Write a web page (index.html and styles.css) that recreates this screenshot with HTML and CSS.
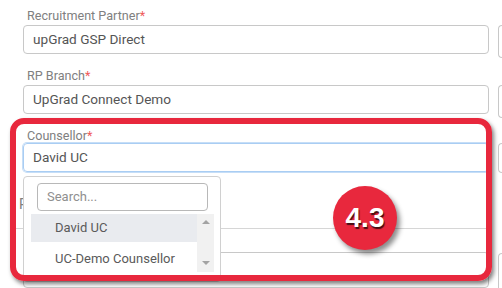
FILE: index.html
```html
<!DOCTYPE html>
<html lang="en">
<head>
  <meta charset="UTF-8" />
  <meta name="viewport" content="width=device-width, initial-scale=1.0"/>
  <title>Counsellor</title>
  <link rel="stylesheet" href="styles.css">
</head>
<body>

  <div class="page">
    <div class="row">
      <div class="field">
        <label>Recruitment Partner<span class="req">*</span></label>
        <div class="input">upGrad GSP Direct</div>
      </div>
      <div class="side"></div>
    </div>

    <div class="row">
      <div class="field">
        <label>RP Branch<span class="req">*</span></label>
        <div class="input">UpGrad Connect Demo</div>
      </div>
      <div class="side"></div>
    </div>

    <div class="row">
      <div class="field">
        <label>Counsellor<span class="req">*</span></label>
        <div class="input focus">David UC</div>

        <div class="dropdown">
          <div class="search">Search...</div>
          <div class="list">
            <div class="options">
              <div class="option active">David UC</div>
              <div class="option">UC-Demo Counsellor</div>
            </div>
            <div class="scrollbar">
              <span class="arrow up"></span>
              <span class="arrow down"></span>
            </div>
          </div>
        </div>
      </div>
      <div class="side side-focus"></div>
    </div>

    <div class="row">
      <div class="field">
        <label class="label-back">P</label>
        <div class="divider"></div>
        <div class="input input-last"></div>
      </div>
      <div class="side side-last"></div>
    </div>

    <div class="frame"></div>
    <div class="badge">4.3</div>
  </div>

</body>
</html>
```

FILE: styles.css
```css
body { margin: 0; font-family: Roboto, "Noto Sans", sans-serif; background: #fff; overflow: hidden; }
.page {
  position: relative;
  box-sizing: border-box;
  width: 502px;
  height: 288px;
  padding: 8px 0 0 23px;
  overflow: hidden;
}

.row {
  display: grid;
  grid-template-columns: 466px 1fr;
  column-gap: 9px;
  align-items: start;
  margin-bottom: 14px;
}
.field { position: relative; }

label {
  display: block;
  margin: 0 0 1px 4px;
  font-size: 12.6px;
  line-height: 16px;
  color: #808080;
}
.req { color: #ef5a5a; }

.input {
  box-sizing: border-box;
  height: 29px;
  border: 1px solid #c8c8c8;
  border-radius: 4px;
  padding: 0 9px;
  font-size: 13.6px;
  line-height: 27px;
  color: #555;
}
.input.focus {
  margin-top: -2px;
  border-color: #a9cdf3;
  box-shadow: 0 0 0 1px #c6def7;
}

.side {
  box-sizing: border-box;
  height: 33px;
  margin: 17px 0 -4px;
  border: 1px solid #c8c8c8;
  border-right: 0;
  border-radius: 4px 0 0 4px;
}
.side-focus { margin: 15px 0 0; height: 30px; }
.side-last { margin: 66px 0 0; height: 40px; }

.dropdown {
  position: absolute;
  top: calc(100% + 4px);
  left: 0;
  width: 198px;
  height: 106px;
  box-sizing: border-box;
  background: #fff;
  border: 1px solid #d0d0d0;
  border-radius: 4px;
  z-index: 2;
}
.search {
  box-sizing: border-box;
  height: 28px;
  margin: 6px 12px 0 13px;
  border: 1px solid #b8b8b8;
  border-radius: 4px;
  padding-left: 9px;
  font-size: 13px;
  line-height: 26px;
  color: #8f8f8f;
}
.list {
  display: flex;
  margin: 3px 6px 0 7px;
  height: 58px;
}
.options { flex: 1; }
.option {
  height: 28px;
  padding-left: 24px;
  font-size: 13px;
  line-height: 28px;
  color: #5a5a5a;
}
.option + .option { height: 29px; line-height: 33px; }
.option.active { background: #e9ebef; }
.scrollbar {
  width: 17px;
  background: #f1f1f1;
  display: flex;
  flex-direction: column;
  justify-content: space-between;
  align-items: center;
  padding: 6px 0 7px;
  box-sizing: border-box;
}
.arrow { width: 0; height: 0; border-left: 4px solid transparent; border-right: 4px solid transparent; }
.arrow.up { border-bottom: 4px solid #a3a3a3; }
.arrow.down { border-top: 4px solid #a3a3a3; }

.label-back { margin: 9px 0 0 -4px; font-size: 14px; }
.divider { height: 1px; margin: 16px 0 0 -8px; background: #d6d6d6; }
.input-last { margin-top: 23px; height: 36px; }

.frame {
  position: absolute;
  left: 10px;
  top: 118px;
  width: 482px;
  height: 163px;
  box-sizing: border-box;
  border: 6px solid #e8283d;
  border-radius: 14px;
  box-shadow: 2px 3px 4px rgba(0, 0, 0, 0.5);
  z-index: 3;
}
.badge {
  position: absolute;
  left: 333px;
  top: 186px;
  width: 64px;
  height: 64px;
  border-radius: 50%;
  background: #e8283d;
  box-shadow: 3px 4px 5px rgba(0, 0, 0, 0.45);
  color: #fff;
  font-family: "Liberation Sans", Arial, sans-serif;
  font-weight: bold;
  font-size: 28px;
  line-height: 64px;
  text-align: center;
  text-shadow: 1px 2px 1px rgba(0, 0, 0, 0.7);
  z-index: 3;
}
```
